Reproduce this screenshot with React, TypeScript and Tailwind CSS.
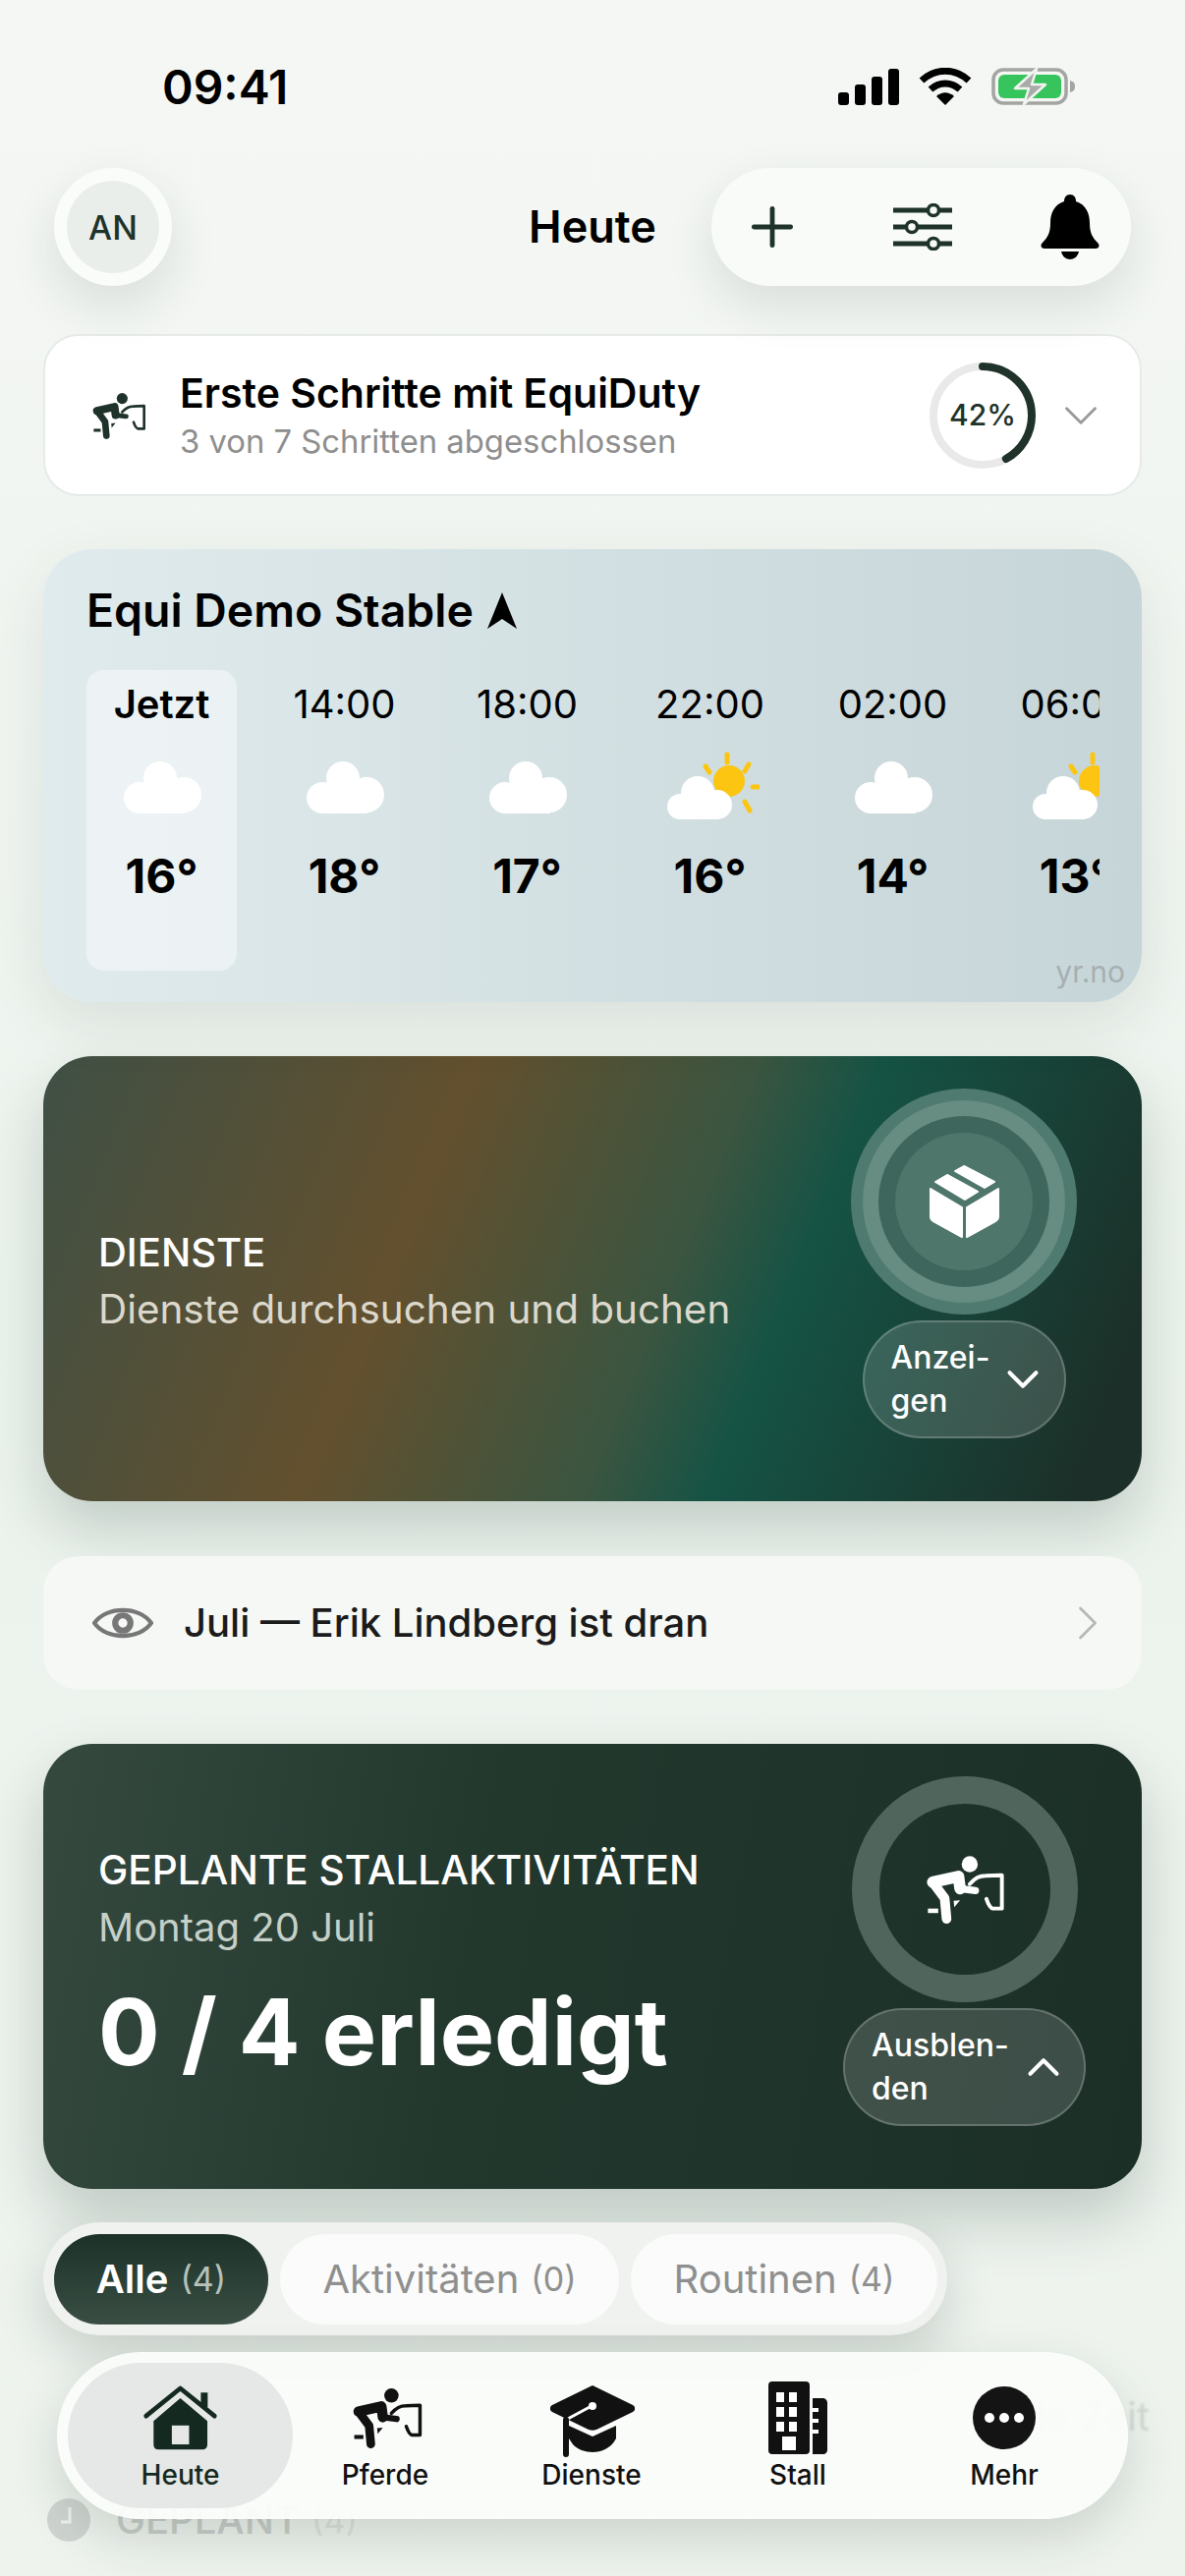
import { ChevronDown, ChevronRight, ChevronUp, Plus } from "lucide-react";

const forecast = [
  { label: "Jetzt", temp: "16°", sun: false },
  { label: "14:00", temp: "18°", sun: false },
  { label: "18:00", temp: "17°", sun: false },
  { label: "22:00", temp: "16°", sun: true },
  { label: "02:00", temp: "14°", sun: false },
  { label: "06:00", temp: "13°", sun: true },
];

function RiderIcon({ className }: { className: string }) {
  return (
    <svg viewBox="295 290 260 220" className={className} fill="none" stroke="currentColor" strokeLinecap="round" strokeLinejoin="round">
      <circle cx="440" cy="322" r="25" fill="currentColor" stroke="none" />
      <path d="M325 378 L405 360 L410 398" strokeWidth="36" />
      <path d="M325 378 L362 428 L368 492" strokeWidth="30" />
      <path d="M410 398 L458 404" strokeWidth="22" />
      <path d="M440 384 C458 364 470 358 490 358 L540 356 L540 460 L512 460 C502 458 496 442 492 430" strokeWidth="12" />
      <path d="M310 467 L342 467" strokeWidth="14" strokeLinecap="butt" />
      <path d="M390 436 L410 434 L392 456 Z" fill="currentColor" stroke="none" />
    </svg>
  );
}

function SignalIcon() {
  return (
    <svg viewBox="0 0 62 37" className="w-[62px] h-[37px]" fill="#000">
      <rect x="0" y="24" width="11" height="13" rx="3" />
      <rect x="17" y="16" width="11" height="21" rx="3" />
      <rect x="34" y="8" width="11" height="29" rx="3" />
      <rect x="51" y="0" width="11" height="37" rx="3" />
    </svg>
  );
}

function WifiIcon() {
  return (
    <svg viewBox="0 0 54 38" className="w-[54px] h-[38px]" fill="none" stroke="#000" strokeWidth="7">
      <path d="M3 13 C17 0 37 0 51 13" />
      <path d="M12 22 C21 14 33 14 42 22" />
      <path d="M18 29 L27 38 L36 29 C30 24 24 24 18 29 Z" fill="#000" stroke="none" />
    </svg>
  );
}

function BatteryIcon() {
  return (
    <svg viewBox="0 0 86 38" className="w-[86px] h-[38px]">
      <rect x="2" y="2" width="74" height="34" rx="10" fill="none" stroke="#a3a5a3" strokeWidth="3.5" />
      <rect x="7" y="7" width="64" height="24" rx="6" fill="#38c45c" />
      <path d="M80 13 C84 14 85 16 85 19 C85 22 84 24 80 25 Z" fill="#a3a5a3" />
      <path d="M46 1 L24 21 L38 21 L33 37 L55 17 L41 17 Z" fill="#a9aba9" stroke="#f1f5f1" strokeWidth="2.5" strokeLinejoin="round" />
    </svg>
  );
}

function SlidersIcon() {
  return (
    <svg viewBox="0 0 60 48" className="w-[60px] h-[48px]" fill="#f8faf8" stroke="#1f332a" strokeWidth="5">
      <path d="M0 7 H60 M0 24 H60 M0 41 H60" strokeLinecap="round" />
      <circle cx="41" cy="7" r="5.5" strokeWidth="3.5" />
      <circle cx="19" cy="24" r="5.5" strokeWidth="3.5" />
      <circle cx="41" cy="41" r="5.5" strokeWidth="3.5" />
    </svg>
  );
}

function BellIcon() {
  return (
    <svg viewBox="0 0 60 66" className="w-[60px] h-[66px]" fill="#000">
      <path d="M30 0 C34 0 36 3 36 7 C46 10 50 19 50 29 C50 39 53 44 58 49 C61 52 59 55 56 55 H4 C1 55 -1 52 2 49 C7 44 10 39 10 29 C10 19 14 10 24 7 C24 3 26 0 30 0 Z" />
      <path d="M21 58 H39 C38 63 34 66 30 66 C26 66 22 63 21 58 Z" />
    </svg>
  );
}

function WeatherIcon({ sun }: { sun: boolean }) {
  if (sun) {
    return (
      <svg viewBox="-50 0 100 76" className="w-[100px] h-[76px] shrink-0">
        <circle cx="19" cy="30" r="16" fill="#fbc512" />
        <g stroke="#fbc512" strokeWidth="5" strokeLinecap="round">
          <path d="M17 3 V11" />
          <path d="M-5 15 L-1 21" />
          <path d="M39 13 L35 20" />
          <path d="M43 36 H49" />
          <path d="M35 51 L40 60" />
        </g>
        <g fill="#fff">
          <circle cx="-13" cy="42" r="17" />
          <circle cx="7" cy="54" r="15" />
          <circle cx="-31" cy="56" r="13" />
          <rect x="-32" y="48" width="40" height="21" />
        </g>
      </svg>
    );
  }
  return (
    <svg viewBox="-50 0 100 76" className="w-[100px] h-[76px] shrink-0" fill="#fff">
      <circle cx="-2" cy="27" r="17" />
      <circle cx="22" cy="44" r="18" />
      <circle cx="-23" cy="47" r="16" />
      <rect x="-23" y="32" width="46" height="31" />
    </svg>
  );
}

function BoxIcon() {
  return (
    <svg viewBox="0 0 71 74" className="w-[71px] h-[74px]" fill="#fff" stroke="#fff" strokeWidth="2" strokeLinejoin="round">
      <path d="M1 24 L33 43 V73 L4 57 C2 56 1 54 1 52 Z" />
      <path d="M38 43 L70 24 V52 C70 54 69 56 67 57 L38 73 Z" />
      <path d="M26 6 L35 1 L66 17 L56 23 Z" />
      <path d="M6 17 L18 10 L49 27 L36 35 Z" />
    </svg>
  );
}

function HouseIcon() {
  return (
    <svg viewBox="260 78 230 205" className="w-[77px] h-[68px]">
      <path d="M270 175 L375 90 L480 175" fill="none" stroke="#14291f" strokeWidth="14" strokeLinecap="round" strokeLinejoin="round" />
      <rect x="438" y="103" width="21" height="45" fill="#14291f" />
      <path d="M293 190 L375 120 L458 190 V262 C458 272 452 278 442 278 H308 C298 278 293 272 293 262 Z" fill="#14291f" />
      <rect x="349" y="204" width="53" height="58" fill="#e5e8e6" />
    </svg>
  );
}

function CapIcon() {
  return (
    <svg viewBox="0 0 86 76" className="w-[86px] h-[76px] translate-y-[5px] translate-x-[1px]">
      <path d="M43 0 L84 20 C87 22 87 25 84 27 L47 45 C44 46 42 46 39 45 L2 27 C-1 25 -1 22 2 20 Z" fill="#111" />
      <path d="M19 41 L43 52 L67 41 V54 C62 64 52 68 43 68 C36 68 27 65 23 60 L19 54 Z" fill="#111" />
      <path d="M42 21 L16 35" stroke="#fff" strokeWidth="3" fill="none" />
      <circle cx="43" cy="21" r="4" fill="#fff" />
      <path d="M16 35 V70" stroke="#111" strokeWidth="6" strokeLinecap="round" fill="none" />
    </svg>
  );
}

function BuildingIcon() {
  return (
    <svg viewBox="0 0 60 74" className="w-[60px] h-[74px]" fill="#111">
      <rect x="0" y="0" width="42" height="74" rx="4" />
      <path d="M45 17 H55 C58 17 60 19 60 22 V70 C60 72 58 74 56 74 H45 Z" />
      <g fill="#fff">
        <rect x="8" y="11" width="8" height="10" />
        <rect x="21" y="11" width="8" height="10" />
        <rect x="8" y="26" width="8" height="10" />
        <rect x="21" y="26" width="8" height="10" />
        <rect x="8" y="41" width="8" height="10" />
        <rect x="21" y="41" width="8" height="10" />
        <rect x="14" y="56" width="14" height="14" />
        <rect x="45" y="27" width="6" height="4" />
        <rect x="45" y="38" width="6" height="4" />
        <rect x="45" y="49" width="6" height="4" />
      </g>
    </svg>
  );
}

function MoreIcon() {
  return (
    <div className="w-[64px] h-[64px] rounded-full bg-[#141414] flex items-center justify-center gap-[5px]">
      <span className="w-[10px] h-[10px] rounded-full bg-white" />
      <span className="w-[10px] h-[10px] rounded-full bg-white" />
      <span className="w-[10px] h-[10px] rounded-full bg-white" />
    </div>
  );
}

function NavItem({ label, active, children }: { label: string; active?: boolean; children: React.ReactNode }) {
  return (
    <div
      className={`h-[148px] flex flex-col items-center rounded-[74px] ${
        active ? "bg-[#e5e8e6] text-[#14291f] w-[229px]" : "text-[#111] w-[210px]"
      }`}
    >
      <div className="h-[84px] mt-[14px] flex items-center justify-center">{children}</div>
      <span className="text-[28px] leading-[36px] font-medium -mt-[2px]">{label}</span>
    </div>
  );
}

export default function App() {
  return (
    <div className="relative w-[1206px] h-[2622px] overflow-hidden bg-gradient-to-b from-[#f5f7f4] via-[#ecf3ed] to-[#eef3ee] [font-family:Inter,sans-serif] text-black">
      <div className="px-[44px]">
        {/* status bar */}
        <div className="h-[171px] flex items-start justify-between pt-[64px] pl-[121px] pr-[67px]">
          <span className="text-[48px] leading-[50px] font-semibold">09:41</span>
          <div className="flex items-center gap-[20px] pt-[5px]">
            <SignalIcon />
            <WifiIcon />
            <BatteryIcon />
          </div>
        </div>

        {/* header */}
        <div className="mx-[11px] grid grid-cols-[1fr_auto_1fr] items-center">
          <div className="w-[120px] h-[120px] rounded-full bg-[#fafcfa] shadow-[0_20px_50px_rgba(30,60,50,0.12)] flex items-center justify-center">
            <div className="w-[94px] h-[94px] rounded-full bg-[#eaeeeb] flex items-center justify-center text-[#1f332a] text-[34px] font-medium">
              AN
            </div>
          </div>
          <span className="text-[45px] font-semibold">Heute</span>
          <div className="justify-self-end w-[427px] h-[120px] rounded-[60px] bg-[#f8fbf8] shadow-[0_20px_50px_rgba(30,60,50,0.12)] flex items-center pl-[30px] pr-[32px] justify-between">
            <Plus className="w-[64px] h-[64px] text-[#1f332a]" strokeWidth={1.8} />
            <SlidersIcon />
            <BellIcon />
          </div>
        </div>

        {/* onboarding */}
        <div className="mt-[49px] h-[165px] rounded-[36px] bg-white border-2 border-[#e6ebe7] flex items-center pl-[46px] pr-[31px]">
          <RiderIcon className="w-[58px] h-[50px] text-[#1f332a] shrink-0" />
          <div className="ml-[33px] flex-1">
            <div className="text-[41px] leading-[48px] font-semibold">Erste Schritte mit EquiDuty</div>
            <div className="text-[32.8px] leading-[40px] mt-[5px] text-[#8e8e8e]">3 von 7 Schritten abgeschlossen</div>
          </div>
          <div className="relative w-[108px] h-[108px]">
            <svg viewBox="0 0 108 108" className="w-[108px] h-[108px] -rotate-90">
              <circle cx="54" cy="54" r="50" fill="none" stroke="#e8e9e8" strokeWidth="8" />
              <circle cx="54" cy="54" r="50" fill="none" stroke="#1f332a" strokeWidth="8" strokeLinecap="round" strokeDasharray="132 314" />
            </svg>
            <div className="absolute inset-0 flex items-center justify-center text-[30px] font-medium text-[#1f332a]">42%</div>
          </div>
          <ChevronDown className="ml-[17px] w-[58px] h-[58px] text-[#9a9a9a]" strokeWidth={1.2} />
        </div>

        {/* weather */}
        <div className="relative mt-[54px] h-[461px] rounded-[50px] bg-gradient-to-r from-[#e0ebed] to-[#c6d5d8] shadow-[0_20px_60px_rgba(30,60,50,0.1)] pt-[37px] pl-[44px] pr-[43px]">
          <div className="h-[50px] flex items-center gap-[14px]">
            <span className="text-[46.4px] leading-[50px] font-semibold">Equi Demo Stable</span>
            <svg viewBox="0 0 30 37" className="w-[30px] h-[37px]">
              <path d="M15 0 L30 37 L15 27 L0 37 Z" fill="#000" />
            </svg>
          </div>
          <div className="mt-[36px] flex gap-[33px] overflow-hidden">
            {forecast.map((hour, i) => (
              <div
                key={hour.label}
                className={`w-[153px] h-[306px] shrink-0 rounded-[18px] flex flex-col items-center pt-[11px] ${i === 0 ? "bg-white/45" : ""}`}
              >
                <span className={`text-[40px] leading-[48px] ${i === 0 ? "font-semibold" : ""}`}>{hour.label}</span>
                <div className="mt-[24px]">
                  <WeatherIcon sun={hour.sun} />
                </div>
                <span className="mt-[23px] text-[48px] leading-[56px] font-bold">{hour.temp}</span>
              </div>
            ))}
          </div>
          <span className="absolute right-[17px] bottom-[8px] text-[30px] text-[#a5b0b2]">yr.no</span>
        </div>

        {/* services */}
        <div className="mt-[55px] h-[453px] rounded-[50px] bg-[linear-gradient(112deg,#3f5045_0%,#63502e_34%,#3b5540_56%,#155345_66%,#1c2f28_95%)] shadow-[0_30px_60px_rgba(30,60,50,0.2)] flex items-start pl-[56px] pr-[66px] justify-between">
          <div className="pt-[176px]">
            <div className="text-[40px] leading-[48px] font-medium text-white">DIENSTE</div>
            <div className="text-[40.4px] leading-[48px] mt-[10px] text-[#dcd8cc]">Dienste durchsuchen und buchen</div>
          </div>
          <div className="w-[230px] pt-[33px] flex flex-col items-center">
            <div className="w-[230px] h-[230px] rounded-full bg-[#4f7a6f] flex items-center justify-center">
              <div className="w-[206px] h-[206px] rounded-full bg-[#678c81] flex items-center justify-center">
                <div className="w-[174px] h-[174px] rounded-full bg-[#3f665c] flex items-center justify-center">
                  <div className="w-[140px] h-[140px] rounded-full bg-[#4f766b] flex items-center justify-center">
                    <BoxIcon />
                  </div>
                </div>
              </div>
            </div>
            <div className="mt-[6px] w-[207px] h-[120px] shrink-0 rounded-[60px] bg-white/15 border-2 border-white/20 flex items-center justify-between pl-[27px] pr-[15px] text-white">
              <span className="text-[32px] leading-[44px] font-medium">
                Anzei-
                <br />
                gen
              </span>
              <ChevronDown className="w-[54px] h-[54px]" strokeWidth={1.8} />
            </div>
          </div>
        </div>

        {/* rotation */}
        <div className="mt-[56px] h-[136px] rounded-[36px] bg-[#f5f8f5] flex items-center pl-[50px] pr-[25px]">
          <svg viewBox="0 0 60 40" className="w-[62px] h-[42px] shrink-0" fill="none" stroke="#777" strokeWidth="4">
            <path d="M2 20 C14 3 46 3 58 20 C46 37 14 37 2 20 Z" />
            <circle cx="30" cy="20" r="7.5" strokeWidth="6" />
          </svg>
          <span className="ml-[31px] flex-1 text-[40px] font-medium text-[#1b1b1b]">Juli — Erik Lindberg ist dran</span>
          <ChevronRight className="w-[60px] h-[60px] text-[#b5b8b5]" strokeWidth={1.1} />
        </div>

        {/* planned activities */}
        <div className="mt-[55px] h-[453px] rounded-[50px] bg-[linear-gradient(100deg,#35493f_0%,#22382d_40%,#1b2f27_100%)] shadow-[0_30px_60px_rgba(30,60,50,0.22)] flex items-start pl-[56px] pr-[57px] justify-between">
          <div className="pt-[105px]">
            <div className="text-[40.5px] leading-[48px] font-medium text-white">GEPLANTE STALLAKTIVITÄTEN</div>
            <div className="text-[40px] leading-[48px] mt-[10px] text-[#c5d0c9]">Montag 20 Juli</div>
            <div className="text-[93px] leading-[110px] mt-[27px] font-bold text-white">0 / 4 erledigt</div>
          </div>
          <div className="w-[247px] pt-[33px] flex flex-col items-center">
            <div className="w-[230px] h-[230px] rounded-full border-[28px] border-[#50655b] flex items-center justify-center">
              <RiderIcon className="w-[86px] h-[72px] text-white" />
            </div>
            <div className="mt-[6px] w-[247px] h-[120px] shrink-0 rounded-[60px] bg-white/15 border-2 border-white/20 flex items-center justify-between pl-[27px] pr-[14px] text-white">
              <span className="text-[32px] leading-[44px] font-medium">
                Ausblen-
                <br />
                den
              </span>
              <ChevronUp className="w-[54px] h-[54px]" strokeWidth={1.8} />
            </div>
          </div>
        </div>

        {/* filter */}
        <div className="mt-[34px] w-[920px] h-[115px] rounded-[58px] bg-[#eff2ef] shadow-[0_20px_50px_rgba(30,50,40,0.18)] flex items-center pl-[11px] gap-[12px]">
          <div className="w-[218px] h-[92px] rounded-[46px] bg-gradient-to-b from-[#1c3228] to-[#3a4e44] flex items-center justify-center gap-[12px] text-white">
            <span className="text-[40px] font-semibold">Alle</span>
            <span className="text-[34px] text-[#b6c2bb]">(4)</span>
          </div>
          <div className="w-[345px] h-[92px] rounded-[46px] bg-[#fafbfa] flex items-center justify-center gap-[12px] text-[#8f8f8f]">
            <span className="text-[40px]">Aktivitäten</span>
            <span className="text-[34px]">(0)</span>
          </div>
          <div className="w-[312px] h-[92px] rounded-[46px] bg-[#fafbfa] flex items-center justify-center gap-[12px] text-[#8f8f8f]">
            <span className="text-[40px]">Routinen</span>
            <span className="text-[34px]">(4)</span>
          </div>
        </div>

        {/* list behind the tab bar */}
        <div className="mt-[58px] flex items-center justify-end -mr-[8px] h-[50px] text-[40px] text-[#d3d9d4] blur-[1px] whitespace-nowrap">
          <span>Alle Zeit</span>
        </div>
        <div className="mt-[50px] flex items-center text-[#c8cec9]">
          <svg viewBox="0 0 44 44" className="ml-[4px] w-[44px] h-[44px] shrink-0">
            <circle cx="22" cy="22" r="22" fill="#cfd4d0" />
            <path d="M23 9 V24 H14" fill="none" stroke="#eef3ee" strokeWidth="3" />
          </svg>
          <span className="ml-[26px] text-[40px] font-medium">GEPLANT</span>
          <span className="ml-[12px] text-[34px] text-[#dde2de]">(4)</span>
        </div>
      </div>

      {/* tab bar */}
      <div className="absolute left-[58px] top-[2394px] w-[1090px] h-[170px] rounded-[85px] bg-[#fafcfa]/95 shadow-[0_20px_50px_rgba(30,50,40,0.16)] flex items-center pl-[11px]">
        <NavItem label="Heute" active>
          <HouseIcon />
        </NavItem>
        <div className="-ml-[11px] flex">
          <NavItem label="Pferde">
            <RiderIcon className="w-[76px] h-[64px] text-[#111] translate-x-[2px]" />
          </NavItem>
          <NavItem label="Dienste">
            <CapIcon />
          </NavItem>
          <NavItem label="Stall">
            <BuildingIcon />
          </NavItem>
          <NavItem label="Mehr">
            <MoreIcon />
          </NavItem>
        </div>
      </div>
    </div>
  );
}
